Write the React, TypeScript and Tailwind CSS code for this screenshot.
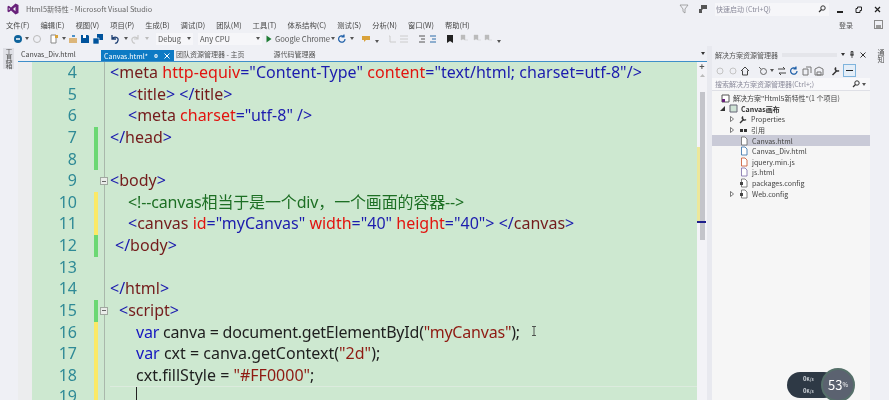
import React from "react";

const B = ({ children }: { children: React.ReactNode }) => <span className="text-[#1c1cae]">{children}</span>;
const M = ({ children }: { children: React.ReactNode }) => <span className="text-[#741c1c]">{children}</span>;
const R = ({ children }: { children: React.ReactNode }) => <span className="text-[#e2140f]">{children}</span>;

type Row = { n: number; bar?: "g" | "y"; fold?: boolean; pad: string; code?: React.ReactNode };

const rows: Row[] = [
  { n: 4, pad: "pl-0", code: <span className="tracking-[0.04px]"><B>&lt;</B><M>meta</M> <R>http-equiv</R><B>="Content-Type"</B> <R>content</R><B>="text/html; charset=utf-8"/&gt;</B></span> },
  { n: 5, pad: "pl-[18px]", code: <><B>&lt;</B><M>title</M><B>&gt;</B> <B>&lt;/</B><M>title</M><B>&gt;</B></> },
  { n: 6, pad: "pl-[18px]", code: <><B>&lt;</B><M>meta</M> <R>charset</R><B>="utf-8"</B> <B>/&gt;</B></> },
  { n: 7, bar: "g", pad: "pl-0", code: <><B>&lt;/</B><M>head</M><B>&gt;</B></> },
  { n: 8, bar: "g", pad: "pl-0" },
  { n: 9, fold: true, pad: "pl-0", code: <><B>&lt;</B><M>body</M><B>&gt;</B></> },
  { n: 10, bar: "y", pad: "pl-[18px]", code: <span className="tracking-[-0.15px] text-[#1d6f24]">&lt;!--canvas相当于是一个div，一个画面的容器--&gt;</span> },
  { n: 11, bar: "y", pad: "pl-[18px]", code: <><B>&lt;</B><M>canvas</M> <R>id</R><B>="myCanvas"</B> <R>width</R><B>="40"</B> <R>height</R><B>="40"</B><B>&gt;</B> <B>&lt;/</B><M>canvas</M><B>&gt;</B></> },
  { n: 12, bar: "g", pad: "pl-[5px]", code: <><B>&lt;/</B><M>body</M><B>&gt;</B></> },
  { n: 13, pad: "pl-0" },
  { n: 14, pad: "pl-0", code: <><B>&lt;/</B><M>html</M><B>&gt;</B></> },
  { n: 15, bar: "g", fold: true, pad: "pl-[9px]", code: <><B>&lt;</B><M>script</M><B>&gt;</B></> },
  { n: 16, bar: "y", pad: "pl-[26px]", code: <span className="tracking-[-0.2px]"><span className="text-[#1616c0]">var</span> canva = document.getElementById(<span className="text-[#8f1a12]">"myCanvas"</span>);</span> },
  { n: 17, bar: "y", pad: "pl-[26px]", code: <><span className="text-[#1616c0]">var</span> cxt = canva.getContext(<span className="text-[#8f1a12]">"2d"</span>);</> },
  { n: 18, bar: "y", pad: "pl-[26px]", code: <>cxt.fillStyle = <span className="text-[#8f1a12]">"#FF0000"</span>;</> },
];

const menus = ["文件(F)", "编辑(E)", "视图(V)", "项目(P)", "生成(B)", "调试(D)", "团队(M)", "工具(T)", "体系结构(C)", "测试(S)", "分析(N)", "窗口(W)", "帮助(H)"];

const Dd = ({ c = "#555" }: { c?: string }) => (
  <svg width="4" height="3" viewBox="0 0 4 3" className="shrink-0"><path d="M0 0h4L2 3z" fill={c} /></svg>
);

const Ic = ({ children, w = 10 }: { children: React.ReactNode; w?: number }) => (
  <svg width={w} height="10" viewBox="0 0 10 10" className="shrink-0">{children}</svg>
);

const File = ({ c = "#666", badge }: { c?: string; badge?: string }) => (
  <Ic>
    <path d="M2.500 1h3.500l2 2v6h-5.500z" fill="#fff" stroke={c} strokeWidth=".8" />
    {badge && <path d="M1 4h3v3H1z" fill={badge} />}
  </Ic>
);

const Tree = ({ pad, arrow, children, icon, sel, bold }: { pad: string; arrow?: string; children: React.ReactNode; icon: React.ReactNode; sel?: boolean; bold?: boolean }) => (
  <div className={`flex h-[10.600px] items-center ${pad} ${sel ? "bg-[#c9cad7]" : ""}`}>
    <span className="flex w-[9px] shrink-0 items-center">
      {arrow === "r" && <svg width="4" height="6" viewBox="0 0 4 6"><path d="M.5.500L3.500 3 .5 5.500z" fill="#fff" stroke="#444" strokeWidth=".7" /></svg>}
      {arrow === "d" && <svg width="5" height="5" viewBox="0 0 5 5"><path d="M5 0v5H0z" fill="#333" /></svg>}
    </span>
    {icon}
    <span className={`ml-[3px] whitespace-nowrap text-[7px] leading-[10px] ${bold ? "font-bold text-[#333]" : "text-[#444]"}`}>{children}</span>
  </div>
);

export default function App() {
  return (
    <div className="relative flex h-[400px] w-[889px] flex-col overflow-hidden bg-[#eff0f5] font-['Noto_Sans_CJK_SC','Noto_Sans',sans-serif] text-[#555] blur-[0.3px]">
      {/* Title bar */}
      <div className="flex h-[18px] shrink-0 items-center pl-[7px]">
        <svg width="12" height="12" viewBox="0 0 12 12" className="shrink-0"><path d="M8.500.5L11.500 2v8l-3 1.500L4 7.500 1.800 9.200.5 8.500v-5l1.300-.7L4 4.500zM8.500 3.700L6 6l2.500 2.300zM1.800 4.700v2.600L3.100 6z" fill="#68217a" fillRule="evenodd" /></svg>
        <span className="ml-[7px] whitespace-nowrap text-[7.300px] leading-[10px] text-[#666]">Html5新特性 - Microsoft Visual Studio</span>
        <div className="ml-auto flex items-center">
          <svg width="10" height="10" viewBox="0 0 10 10"><path d="M1 1h8L6 5v4L4 7.500V5z" fill="none" stroke="#888" strokeWidth=".7" /></svg>
          <svg width="10" height="10" viewBox="0 0 10 10" className="ml-[9px]"><path d="M3 1h6v4H5L3 7zM1 5h3v4H1z" fill="#555" /></svg>
          <div className="ml-[7px] flex h-[13px] w-[114px] items-center justify-between bg-[#f6f6f9] pl-[1px] pr-[3px] text-[7px] leading-[10px] text-[#8a8a9a]">
            <span>快速启动 (Ctrl+Q)</span>
            <svg width="8" height="8" viewBox="0 0 8 8"><circle cx="5" cy="3" r="2.200" fill="none" stroke="#333" /><path d="M3.500 4.500L1 7" stroke="#333" strokeWidth="1.200" /></svg>
          </div>
          <div className="mb-[3px] ml-[8px] h-[2px] w-[6px] self-end bg-[#222]" />
          <svg width="7" height="7" viewBox="0 0 7 7" className="ml-[12px]"><path d="M2.500 1h4v3.500h-1.500v2h-4v-4h1.500z" fill="none" stroke="#222" /></svg>
          <svg width="7" height="7" viewBox="0 0 7 7" className="ml-[12px] mr-[8px]"><path d="M1 1l5 5M6 1L1 6" stroke="#222" strokeWidth="1.200" /></svg>
        </div>
      </div>

      {/* Menu */}
      <div className="flex h-[13px] shrink-0 items-center pl-[6px]">
        <div className="flex gap-[11px] text-[7.300px] leading-[10px] text-[#444]">
          {menus.map((m) => <span key={m} className="whitespace-nowrap">{m}</span>)}
        </div>
        <span className="ml-auto whitespace-nowrap text-[7px] leading-[10px] text-[#555]">登录</span>
        <span className="ml-[21px] mr-[6px] flex h-[9px] w-[9px] items-end justify-center border border-[#8a8a8a]">
          <span className="h-[3px] w-[5px] bg-[#999]" />
        </span>
      </div>

      {/* Toolbar */}
      <div className="flex h-[15px] shrink-0 items-center pl-[13px] text-[7.600px] leading-[10px]">
        <Ic><circle cx="5" cy="5" r="4" fill="#0e639c" /><path d="M3 5h4" stroke="#fff" strokeWidth="1.500" /></Ic>
        <span className="ml-[2px]"><Dd /></span>
        <span className="ml-[3px]"><Ic><circle cx="5" cy="5" r="3.500" fill="none" stroke="#bbb" /></Ic></span>
        <span className="ml-[7px]"><Ic><path d="M2 1h5v8H2z" fill="#fff" stroke="#888" /><path d="M6 1h3v3H6z" fill="#d9a23a" /></Ic></span>
        <span className="ml-[3px]"><Dd /></span>
        <span className="ml-[2px]"><Ic><path d="M1 4h8v5H1z" fill="#dcb67a" /><path d="M4 1h3v2H4z" fill="#4a90c8" /></Ic></span>
        <span className="ml-[2px]"><Ic><path d="M1 1h7l1 1v7H1z" fill="#00539c" /><path d="M3 1h3v3H3z" fill="#fff" /></Ic></span>
        <span className="ml-[3px]"><Ic><path d="M4 0h6v6H4z" fill="#00539c" /><path d="M0 4h6v6H0z" fill="#00539c" stroke="#fff" strokeWidth=".6" /></Ic></span>
        <span className="ml-[7px]"><Ic><path d="M2 1v4h4M2 5c2-3 7-2 6 1.500S5 9 5 9" fill="none" stroke="#1e3f72" strokeWidth="1.300" /></Ic></span>
        <span className="ml-[4px]"><Dd /></span>
        <span className="ml-[2px]"><Ic><path d="M8 1v4H4M8 5C6 2 1 3 2 6.500S5 9 5 9" fill="none" stroke="#c8c8c8" strokeWidth="1.200" /></Ic></span>
        <span className="ml-[5px]"><Dd c="#bbb" /></span>
        <div className="ml-[7px] flex h-[12px] w-[37px] items-center justify-between bg-[#f6f6f9] px-[2px] text-[#555]"><span>Debug</span><Dd /></div>
        <div className="ml-[5px] flex h-[12px] w-[64px] items-center justify-between bg-[#f6f6f9] px-[2px] text-[#555]"><span>Any CPU</span><Dd /></div>
        <svg width="6" height="8" viewBox="0 0 6 8" className="ml-[4px]"><path d="M.5.500L5.500 4 .5 7.500z" fill="#1e7b34" /></svg>
        <span className="ml-[3px] whitespace-nowrap text-[#555]">Google Chrome</span>
        <span className="ml-[1px]"><Dd /></span>
        <span className="ml-[2px]"><Ic><path d="M8 5a3.200 3.200 0 1 1-1.200-2.500M7 .5v2.500H4.500" fill="none" stroke="#1e5fa8" strokeWidth="1.200" /></Ic></span>
        <span className="ml-[3px]"><Dd /></span>
        <span className="ml-[7px]"><Ic><path d="M1 2h8v4H5L3 8V6H1z" fill="#d9a23a" /></Ic></span>
        <span className="ml-[4px] mt-[5px]"><Dd /></span>
        <span className="ml-[8px]"><Ic><path d="M2 2h1v6h6" fill="none" stroke="#ccc" /></Ic></span>
        <span className="ml-[2px]"><Ic><path d="M1 2h8M1 5h8M1 8h8" stroke="#ccc" /></Ic></span>
        <span className="ml-[8px]"><Ic><path d="M2 2h6M4 5h4M2 8h6" stroke="#555" /></Ic></span>
        <span className="ml-[1px]"><Ic><path d="M2 2h6M4 5h4M2 8h6" stroke="#2d6da8" /></Ic></span>
        <span className="ml-[7px]"><Ic><path d="M2 1h6v8L5 7 2 9z" fill="#222" /></Ic></span>
        <span className="ml-[4px]"><Ic><path d="M2 1h4v5L4 5 2 6zM6 6h3" fill="#bbb" stroke="#bbb" strokeWidth=".4" /></Ic></span>
        <span className="ml-[3px]"><Ic><path d="M2 1h4v5L4 5 2 6zM6 6h3" fill="#bbb" stroke="#bbb" strokeWidth=".4" /></Ic></span>
        <span className="ml-[1px]"><Ic><path d="M2 1h4v5L4 5 2 6zM6 6h3" fill="#bbb" stroke="#bbb" strokeWidth=".4" /></Ic></span>
        <span className="ml-[4px] mt-[5px]"><Dd /></span>
      </div>

      {/* Main */}
      <div className="flex min-h-0 flex-1">
        {/* Left rail */}
        <div className="w-[18px] shrink-0 pl-[3px] pt-[2px]">
          <div className="w-[11px] bg-[#dfe0e6] text-[7px] leading-[10px] text-[#555] [writing-mode:vertical-rl]">工具箱</div>
        </div>

        {/* Editor column */}
        <div className="flex w-[689px] shrink-0 flex-col">
          <div className="flex h-[16px] shrink-0 items-end border-b border-[#3f8fc9] text-[7px] leading-[10px]">
            <span className="ml-[3px] w-[80px] self-center whitespace-nowrap text-[#444]">Canvas_Div.html</span>
            <div className="flex h-[11px] w-[73px] items-center bg-[#0e7ac4] pl-[3px] text-white">
              <span className="w-[49px] whitespace-nowrap">Canvas.html*</span>
              <svg width="6" height="6" viewBox="0 0 6 6"><path d="M1 3h4M2 1.500h2v3H2z" stroke="#fff" strokeWidth=".7" fill="none" /></svg>
              <svg width="6" height="6" viewBox="0 0 6 6" className="ml-[5px]"><path d="M.5.500l5 5M5.500.5l-5 5" stroke="#fff" /></svg>
            </div>
            <span className="ml-[2px] self-center whitespace-nowrap text-[#555]">团队资源管理器 - 主页</span>
            <span className="ml-[29px] self-center whitespace-nowrap text-[#555]">源代码管理器</span>
            <span className="ml-auto mr-[2px] self-center"><Dd c="#333" /></span>
          </div>

          <div className="flex min-h-0 flex-1">
            {/* Text view */}
            <div className="relative w-[679px] shrink-0 overflow-hidden bg-[#cde8d0] font-['Noto_Sans','Noto_Sans_CJK_SC',sans-serif] text-[16px] leading-[21.640px] text-[#1f1f1f]">
              {rows.map((r) => (
                <div key={r.n} className="flex h-[21.640px]">
                  <div className="w-[14px] shrink-0 bg-[#ecedee]" />
                  <div className="w-[45px] shrink-0 text-right text-[#2f8a96]">{r.n}</div>
                  <div className="w-[17px] shrink-0" />
                  <div className={`w-[4px] shrink-0 ${r.bar === "g" ? "bg-[#6bd873]" : r.bar === "y" ? "bg-[#fbe965]" : ""}`} />
                  <div className="relative w-[12px] shrink-0">
                    <div className="absolute bottom-0 left-[6px] top-0 w-[1px] bg-[#a9b8ab]" />
                    {r.fold && <div className="absolute left-[2px] top-[7px] flex h-[8px] w-[8px] items-center justify-center border border-[#a0a8a0] bg-[#e9ece9]"><div className="h-[1px] w-[4px] bg-[#666]" /></div>}
                  </div>
                  <div className={`whitespace-pre ${r.pad}`}>{r.code}</div>
                </div>
              ))}
              {/* Line 19 */}
              <div className="flex h-[21.640px]">
                <div className="w-[14px] shrink-0 bg-[#ecedee]" />
                <div className="w-[45px] shrink-0 text-right text-[#2f8a96]">19</div>
                <div className="w-[17px] shrink-0" />
                <div className="w-[4px] shrink-0 bg-[#fbe965]" />
                <div className="relative w-[12px] shrink-0"><div className="absolute bottom-0 left-[6px] top-0 w-[1px] bg-[#a9b8ab]" /></div>
                <div className="flex-1 border-t border-[#dcebde] pl-[26px]"><div className="h-full w-[1px] bg-[#222]" /></div>
              </div>
              {/* I-beam mouse pointer */}
              <svg width="6" height="10" viewBox="0 0 6 10" className="absolute left-[513px] top-[264px]"><path d="M1 .5h4M3 .5v9M1 9.500h4" stroke="#333" strokeWidth=".8" fill="none" /></svg>
            </div>

            {/* Vertical scrollbar */}
            <div className="flex w-[10px] shrink-0 flex-col bg-[#f3f3f7]">
              <div className="flex h-[9px] items-center justify-center text-[9px] font-bold leading-[9px] text-[#555]">+</div>
              <div className="flex h-[9px] items-center justify-center"><svg width="5" height="3" viewBox="0 0 5 3"><path d="M0 3L2.500 0 5 3z" fill="#bbb" /></svg></div>
              <div className="flex flex-col">
                <div className="h-[12px]" />
                <div className="flex h-[129px]">
                  <div className="flex w-[3px] flex-col">
                    <div className="h-[55px]" />
                    <div className="flex-1 bg-[#ece79a]" />
                  </div>
                  <div className="w-[5px] bg-[#c3c4ca]" />
                </div>
                <div className="h-[2px] w-[9px] bg-[#1e1e8c]" />
                <div className="ml-[3px] h-[17px] w-[5px] bg-[#c3c4ca]" />
              </div>
            </div>
          </div>
        </div>

        <div className="w-[5px] shrink-0 bg-[#e8e9ef]" />

        {/* Solution explorer */}
        <div className="flex w-[158px] shrink-0 flex-col bg-[#f6f6f6]">
          <div className="flex h-[17px] shrink-0 items-center bg-[#eff0f5] pl-[3px] pr-[4px] text-[7px] leading-[10px] text-[#555]">
            <span className="whitespace-nowrap">解决方案资源管理器</span>
            <span className="ml-[4px] h-[4px] flex-1 bg-[#e4e5ea]" />
            <span className="ml-[4px]"><Dd c="#333" /></span>
            <svg width="6" height="7" viewBox="0 0 6 7" className="ml-[4px]"><path d="M3 0v7M1 4h4M2 .5h2V4H2z" stroke="#333" strokeWidth=".8" fill="none" /></svg>
            <svg width="6" height="6" viewBox="0 0 6 6" className="ml-[5px]"><path d="M.5.500l5 5M5.500.5l-5 5" stroke="#333" /></svg>
          </div>
          <div className="flex h-[15px] shrink-0 items-center bg-[#eff0f5] pl-[3px] text-[7px]">
            <Ic><circle cx="5" cy="5" r="3" fill="none" stroke="#c4c4c4" /></Ic>
            <span className="ml-[3px]"><Ic><circle cx="5" cy="5" r="3" fill="none" stroke="#c4c4c4" /></Ic></span>
            <span className="ml-[2px]"><Ic><path d="M1 5l4-4 4 4M2.500 4.500V9h5V4.500" fill="none" stroke="#444" /></Ic></span>
            <span className="ml-[8px]"><Ic><circle cx="5.500" cy="5.500" r="3" fill="none" stroke="#666" /><path d="M1 1l2 2" stroke="#666" /></Ic></span>
            <span className="ml-[2px]"><Dd /></span>
            <span className="ml-[3px]"><Ic><path d="M1 3h7M6 1l2 2M9 7H2M4 9L2 7" stroke="#444" /></Ic></span>
            <span className="ml-[2px]"><Ic><path d="M8 5a3.200 3.200 0 1 1-1.200-2.500M7 .5v2.500H4.500" fill="none" stroke="#1e5fa8" strokeWidth="1.200" /></Ic></span>
            <span className="ml-[3px]"><Ic><path d="M1 3h5v6H1zM4 1h5v6" fill="none" stroke="#777" /></Ic></span>
            <span className="ml-[2px]"><Ic><path d="M1 9V3l4-2 4 2v6zM3 6h4v3H3z" fill="none" stroke="#777" /></Ic></span>
            <span className="ml-[7px]"><Ic><path d="M1.500 9L6 4.500M5 1.500a2 2 0 0 0 3 3" fill="none" stroke="#333" strokeWidth="1.500" /></Ic></span>
            <div className="ml-[2px] flex h-[13px] w-[13px] items-center justify-center border border-[#7fb4dd] bg-[#e4eef8]"><div className="h-[1px] w-[7px] bg-[#222]" /></div>
          </div>
          <div className="flex h-[13px] shrink-0 items-center justify-between border-b border-[#dfe0e6] bg-[#f8f8fa] pl-[3px] pr-[4px] text-[7px] leading-[10px] text-[#8a8a9a]">
            <span className="whitespace-nowrap">搜索解决方案资源管理器(Ctrl+;)</span>
            <span className="flex items-center gap-[2px]">
              <svg width="8" height="8" viewBox="0 0 8 8"><circle cx="5" cy="3" r="2.200" fill="none" stroke="#333" /><path d="M3.500 4.500L1 7" stroke="#333" strokeWidth="1.200" /></svg>
              <Dd />
            </span>
          </div>
          <div className="pt-[2px]">
            <Tree pad="pl-0" icon={<svg width="9" height="9" viewBox="0 0 9 9" className="shrink-0"><path d="M1 1h7v7H1z" fill="#fff" stroke="#555" /><path d="M1 5h3v3H1z" fill="#68217a" /></svg>}>解决方案"Html5新特性"(1 个项目)</Tree>
            <Tree pad="pl-[8px]" arrow="d" bold icon={<svg width="9" height="9" viewBox="0 0 9 9" className="shrink-0"><path d="M1 1h7v7H1z" fill="#cfe3d5" stroke="#667" /></svg>}>Canvas画布</Tree>
            <Tree pad="pl-[18px]" arrow="r" icon={<svg width="9" height="9" viewBox="0 0 9 9" className="shrink-0"><path d="M1 8l4-4M4 1.500a2 2 0 0 0 3 3" fill="none" stroke="#333" strokeWidth="1.400" /></svg>}>Properties</Tree>
            <Tree pad="pl-[18px]" arrow="r" icon={<svg width="9" height="9" viewBox="0 0 9 9" className="shrink-0"><path d="M1 3h3v3H1zM5 3h3v3H5z" fill="#333" /></svg>}>引用</Tree>
            <Tree pad="pl-[18px]" sel icon={<File />}>Canvas.html</Tree>
            <Tree pad="pl-[18px]" icon={<File c="#2d6da8" />}>Canvas_Div.html</Tree>
            <Tree pad="pl-[18px]" icon={<File c="#c8502a" />}>jquery.min.js</Tree>
            <Tree pad="pl-[18px]" icon={<File c="#7a6aa8" />}>js.html</Tree>
            <Tree pad="pl-[18px]" icon={<File badge="#444" />}>packages.config</Tree>
            <Tree pad="pl-[18px]" arrow="r" icon={<File badge="#444" />}>Web.config</Tree>
          </div>
        </div>

        {/* Right rail */}
        <div className="flex-1 pl-[6px] pt-[3px] text-[7px] leading-[9px] text-[#555]">
          <div className="w-fit [writing-mode:vertical-rl]">通知</div>
        </div>
      </div>

      {/* Network / CPU floating widget */}
      <div className="absolute left-[787px] top-[372px] flex h-[26px] w-[50px] flex-col justify-center gap-[2px] rounded-full bg-[#2e3945] pl-[16px] text-[6px] font-bold leading-[9px] text-[#d6dbe0]">
        <span>0<span className="text-[4.500px]">K/s</span></span>
        <span>0<span className="text-[4.500px]">K/s</span></span>
      </div>
      <div className="absolute left-[821px] top-[368px] flex h-[34px] w-[34px] items-center justify-center rounded-full border-2 border-[#56706a] bg-[#5b6270] text-[13px] leading-[14px] text-white">
        53<span className="text-[6px]">%</span>
      </div>
    </div>
  );
}
